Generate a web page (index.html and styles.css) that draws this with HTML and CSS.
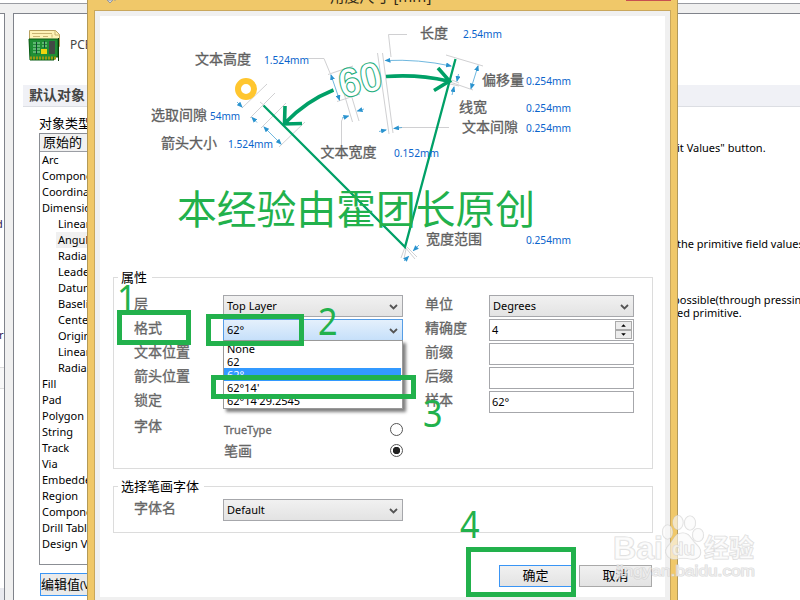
FILE: index.html
```
<!DOCTYPE html>
<html lang="zh-CN">
<head>
<meta charset="utf-8">
<title>角度尺寸</title>
<link rel="stylesheet" href="styles.css">
</head>
<body>
<div class="screen">
  <div class="topline"></div>
  <div class="workspace">
    <aside class="side"><span class="frag f1">d</span><span class="frag f2">r</span><div class="sidebox"></div><div class="sidefoot"></div></aside>
    <main class="prefs">
      <header class="prefs-head">
        <svg class="board" width="33" height="33" viewBox="0 0 33 33">
          <path d="M1.500 1.500h26l4 4v12h-30z" fill="#fff3b8" stroke="#b9a262"/>
          <path d="M27 1v5h5M4 4.500h20M5 7.500h7m3 0h5m4-2v3" fill="none" stroke="#c9b473"/>
          <path d="M1 10h29v18H26v3H2z" fill="#1f8f35" stroke="#075a12"/>
          <path d="M2 29h26" stroke="#9b9a12" stroke-width="3" stroke-dasharray="2 1"/>
          <path d="M30.500 9v23" stroke="#0a3a0a"/>
          <path d="M5 14h7M5 17h7M5 20h7M5 23h7M14 14h5M14 17h5" stroke="#9ee0ae"/>
          <path d="M8.500 13v12M16.500 12v7" stroke="#174a35"/>
          <rect x="21" y="12" width="6" height="13" fill="#424a45"/>
          <rect x="13" y="20" width="6" height="5" fill="#f0d411"/>
        </svg>
        <span>PCB</span>
      </header>
      <h2 class="band">默认对象</h2>
      <div class="columns">
        <section class="objects">
          <div class="objects-title">对象类型</div>
          <div class="list">
            <div class="list-head">原始的</div>
            <ul>
              <li>Arc</li><li>Component Body</li><li>Coordinate</li><li>Dimensions</li>
              <li class="sub">Linear</li><li class="sub on">Angular</li><li class="sub">Radial</li><li class="sub">Leader</li><li class="sub">Datum</li><li class="sub">Baseline</li><li class="sub">Center</li><li class="sub">Original</li><li class="sub">Linear Dia</li><li class="sub">Radial Dia</li>
              <li>Fill</li><li>Pad</li><li>Polygon</li><li>String</li><li>Track</li><li>Via</li><li>Embedded</li><li>Region</li><li>Component</li><li>Drill Table</li><li>Design View</li>
            </ul>
          </div>
          <div class="edit">编辑值<small>(V)</small></div>
        </section>
        <section class="help">
          <p>it Values" button.</p>
          <p class="h2">the primitive field values</p>
          <p class="h3">possible(through pressing<br><span>ed primitive.</span></p>
        </section>
      </div>
    </main>
  </div>

  <div class="dialog">
    <div class="titlebar"><svg width="10" height="4" viewBox="0 0 10 4"><path d="M1 0h6L4 3zM8 0h2" fill="#d8dadc" stroke="#999"/></svg><span class="title">角度尺寸 [mm]</span><i class="close"></i></div>
    <div class="client">
      <div class="page">
        <svg class="diagram" width="565" height="250" viewBox="100 16 565 250">
          <defs>
            <marker id="tip" markerUnits="userSpaceOnUse" markerWidth="6" markerHeight="5" refX="5" refY="2.500" orient="auto-start-reverse"><path d="M0 0L6 2.500L0 5z" fill="#2a93cf"/></marker>
          </defs>
          <g class="guide">
            <path d="M308 58.500H324L330 73M328 74.500L353 66M337 101.500L360 94M343 90L352.500 122M350 91L359 121M343 118L341.500 121V145"/>
            <path d="M267 84L242 108M275 93L250 118M286 103L261 128M305 122L279 147M260 102L265 106"/>
            <path d="M407 34.500H388.500L391 57M377.500 53L389 134M382.500 53L393 133M446 55L483 66M450 82L473 90M450 84L459 86M452 80L459 83M399 127.500H449"/>
            <path d="M405 247L401 258M406 249L404 259M405 247L415 259M407 247L417 257"/>
          </g>
          <g class="arrow">
            <path class="two" d="M331 75L339.500 100"/><path class="two" d="M264 127L281 144"/>
            <path class="two" d="M385.500 60.500Q419 59 451 66"/><path class="two" d="M478 66L471 88.500"/>
            <path d="M237 102L242 107"/><path d="M257 122.500L252 117.500"/><path d="M342 118L348.500 116"/><path d="M364 109L357.500 111"/>
            <path d="M458.500 74L457 81"/><path d="M452 95L454 87"/><path d="M379 131.500L386 130"/><path d="M402 127.500L394 128.500"/>
            <path d="M419 245L413.500 250.500"/><path d="M404 261L408.500 256.500"/>
          </g>
          <circle cx="246" cy="89" r="8" fill="none" stroke="#ffc62f" stroke-width="6"/>
          <g class="dim">
            <path class="leg" d="M263.500 105.500L405 247L455.500 59"/>
            <path d="M333.500 90Q306 101 285 123M285 106L284.500 124L302 123.500"/>
            <path d="M386 76.500Q418 74 448 81M438 68L449.500 81L434 90.500"/>
          </g>
          <text class="sixty" x="338" y="94" textLength="44" lengthAdjust="spacingAndGlyphs" transform="rotate(-13 360 79)">60</text>
          <g class="lab">
            <text x="195" y="64">文本高度</text><text x="151" y="120">选取间隙</text><text x="161" y="148">箭头大小</text>
            <text x="320.500" y="157">文本宽度</text><text x="420" y="38">长度</text><text x="482" y="85">偏移量</text>
            <text x="459" y="112">线宽</text><text x="462" y="132">文本间隙</text><text x="426" y="244">宽度范围</text>
          </g>
          <g class="val">
            <text x="264" y="64" textLength="45" lengthAdjust="spacingAndGlyphs">1.524mm</text><text x="210" y="120" textLength="30" lengthAdjust="spacingAndGlyphs">54mm</text><text x="228" y="148" textLength="45" lengthAdjust="spacingAndGlyphs">1.524mm</text>
            <text x="394" y="157" textLength="45" lengthAdjust="spacingAndGlyphs">0.152mm</text><text x="463" y="38" textLength="39" lengthAdjust="spacingAndGlyphs">2.54mm</text><text x="526" y="85" textLength="45" lengthAdjust="spacingAndGlyphs">0.254mm</text>
            <text x="526" y="112" textLength="45" lengthAdjust="spacingAndGlyphs">0.254mm</text><text x="526" y="132" textLength="45" lengthAdjust="spacingAndGlyphs">0.254mm</text><text x="526" y="244" textLength="45" lengthAdjust="spacingAndGlyphs">0.254mm</text>
          </g>
        </svg>

        <section class="group props">
          <h3>属性</h3>
          <div class="fields">
            <label>层</label><div class="combo">Top Layer<svg class="chev" viewBox="0 0 9 6"><path d="M1 1l3.500 3.500L8 1"/></svg></div><label>单位</label><div class="combo">Degrees<svg class="chev" viewBox="0 0 9 6"><path d="M1 1l3.500 3.500L8 1"/></svg></div>
            <label>格式</label><div class="combo active">62°<svg class="chev" viewBox="0 0 9 6"><path d="M1 1l3.500 3.500L8 1"/></svg>
              <div class="menu"><div>None</div><div>62</div><div class="sel">62°</div><div>62°14'</div><div>62°14'29.2545</div></div>
            </div><label>精确度</label><div class="input spin">4<span class="spinner"><svg viewBox="0 0 17 9"><path d="M5.500 6h6L8.500 3z"/></svg><svg viewBox="0 0 17 9"><path d="M5.500 3h6L8.500 6z"/></svg></span></div>
            <label>文本位置</label><div></div><label>前缀</label><div class="input"></div>
            <label>箭头位置</label><div></div><label>后缀</label><div class="input"></div>
            <label>锁定</label><div></div><label>样本</label><div class="input">62°</div>
          </div>
          <div class="fonts">
            <label>字体</label>
            <div class="radios"><div class="radio"><span class="tt">TrueType</span><i></i></div><div class="radio"><span>笔画</span><i class="checked"></i></div></div>
          </div>
        </section>

        <section class="group stroke">
          <h3>选择笔画字体</h3>
          <div class="fields"><label>字体名</label><div class="combo">Default<svg class="chev" viewBox="0 0 9 6"><path d="M1 1l3.500 3.500L8 1"/></svg></div></div>
        </section>
        <div class="buttons"><div class="btn primary">确定</div><div class="btn">取消</div></div>
      </div>
    </div>
  </div>

  <svg class="watermark" width="150" height="75" viewBox="608 512 150 75">
    <g class="wm">
      <text x="613" y="559" font-size="31" font-weight="bold" textLength="50" lengthAdjust="spacingAndGlyphs">Bai</text>
      <ellipse cx="667.500" cy="532" rx="5" ry="7"/><ellipse cx="678" cy="522.500" rx="5" ry="7"/><ellipse cx="690" cy="523" rx="5.500" ry="7"/><ellipse cx="698" cy="535" rx="5.500" ry="6.500"/>
      <path d="M683 533C674 533 674 541 669 545C662 552 668 560 676 559C681 558 686 558 691 559C700 560 704 552 697 545C691 540 690 533 683 533z"/>
      <text x="672" y="555" font-size="19" font-weight="bold" textLength="23" lengthAdjust="spacingAndGlyphs">du</text>
      <text class="wmcjk" x="704" y="557" font-size="25" font-weight="bold" textLength="50">经验</text>
      <text x="616" y="576" font-size="14" textLength="139" lengthAdjust="spacingAndGlyphs">jingyan.baidu.com</text>
    </g>
  </svg>

  <div class="note headline">本经验由霍团长原创</div>
  <div class="note n1">1</div><div class="note n2">2</div><div class="note n3">3</div><div class="note n4">4</div>
  <div class="mark m1"></div><div class="mark m2"></div><div class="mark m3"></div><div class="mark m4"></div>
</div>
</body>
</html>
```
FILE: styles.css
```
* { box-sizing: border-box; }
body { margin: 0; font: 11px/16px "Noto Sans", "Noto Sans CJK SC", sans-serif; color: #000; }
h2, h3, p, ul { margin: 0; padding: 0; }
.screen { position: relative; width: 800px; height: 600px; overflow: hidden; background: #f0f0f0; display: flex; flex-direction: column; }
.topline { height: 4px; flex: none; background: #fff; border-bottom: 1px solid #9a9ca2; }
.workspace { display: flex; gap: 8px; padding-top: 9px; flex: 1; }
.side { position: relative; width: 5px; background: #fff; border-top: 1px solid #80838b; border-right: 1px solid #80838b; overflow: hidden; }
.frag { position: absolute; color: #302050; }
.f1 { left: -4px; top: 202px; }
.f2 { left: -1px; top: 313px; }
.sidebox { margin-top: 353px; height: 22px; border: solid #ddd; border-width: 1px 0; background: #f8f8f8; }
.sidefoot { margin-top: 199px; height: 13px; background: #e9eaef; }
.prefs { width: 787px; background: #fff; border: solid #80838b; border-width: 1px 0 0 1px; white-space: nowrap; }
.prefs-head { display: flex; height: 71px; padding: 15px 0 0 14px; gap: 9px; font-size: 13px; line-height: 31px; color: #444; }
.prefs-head span { display: inline-block; transform: scaleX(.92); transform-origin: left; }
.band { margin-left: 9px; height: 22px; padding-left: 6px; background: #f0f1f6; border-bottom: 1px solid #dcdee3; font: bold 14px/18px "Noto Sans CJK SC", sans-serif; color: #444; }
.columns { display: flex; }
.objects { width: 637px; padding: 7px 0 0 25px; flex: none; }
.objects-title { height: 19px; font: 13px/18px "Noto Sans CJK SC", sans-serif; }
.list { height: 432px; width: 200px; border: 1px solid #8b8e94; }
.list-head { height: 18px; padding-left: 3px; border-bottom: 1px solid #9b9ea4; background: #f1f1f1; font: 13px/15px "Noto Sans CJK SC", sans-serif; }
.list ul { list-style: none; }
.list li { height: 16px; padding-left: 2px; }
.list .sub { margin-left: 16px; }
.list .on { background: #f0f0f0; }
.edit { margin: 8px 0 0 1px; height: 23px; border: 1px solid #3a95f5; background: #eaeaea; font: 13px/19px "Noto Sans CJK SC", sans-serif; width: 80px; }
.edit small { font: 11px "Noto Sans", sans-serif; }
.help { padding: 34px 0 0 26px; line-height: 13px; }
.h2 { margin-top: 83px; }
.h3 { margin-top: 43px; margin-left: -4px; }
.h3 span { margin-left: 4px; }

.dialog { position: absolute; left: 87px; top: -20px; width: 591px; height: 640px; background: #f0c869; border: 1px solid #b39a58; display: flex; flex-direction: column; padding: 0 6px; }
.titlebar { height: 29px; display: flex; justify-content: space-between; padding: 19px 0 0 12px; flex: none; }
.title { margin: -13px 131px 0 168px; width: 120px; font-size: 15px; line-height: 18px; white-space: nowrap; color: #332b18; font-family: "Noto Sans", "Noto Sans CJK SC", sans-serif; }
.close { width: 45px; height: 1px; background: #c75050; }
.client { flex: 1; border: 1px solid #c9a75c; background: #f0f0f0; padding: 5px 5px 0; }
.page { height: 581px; background: #fff; display: flex; flex-direction: column; }
.diagram { display: block; flex: none; }
.guide path { fill: none; stroke: #d0d0d2; stroke-width: 1; }
.arrow path { fill: none; stroke: #4aa4d6; stroke-width: .8; marker-end: url(#tip); }
.arrow .two { marker-start: url(#tip); }
.dim path { fill: none; stroke: #00a067; stroke-width: 3.6; }
.dim .leg { stroke-width: 2.3; }
.sixty { font: bold 41px "Liberation Sans", sans-serif; fill: #fff; stroke: #21ad7c; stroke-width: 1; }
.lab text { font: 14px "Noto Sans CJK SC", sans-serif; fill: #5f5f5f; stroke: #5f5f5f; stroke-width: .3; }
.val text { font: 11px "Noto Sans", sans-serif; fill: #0a64cc; }

.group { position: relative; margin-left: 13px; width: 540px; border: 1px solid #dcdcdc; flex: none; }
.group h3 { width: max-content; margin: -10px 0 1px 4px; padding: 0 5px 0 3px; background: #fff; font: 13px/17px "Noto Sans CJK SC", sans-serif; }
.props { margin-top: 11px; height: 192px; }
.stroke { margin-top: 17px; height: 47px; }
.fields { display: grid; grid-template-columns: 89px 180px 86px 145px; grid-auto-rows: 22px; row-gap: 2px; padding-left: 20px; column-gap: 0; margin-top: 10px; }
.fields > :nth-child(4n+3) { padding-left: 22px; }
.stroke .fields { margin-top: 5px; }
label, .radio { font: 14px/17px "Noto Sans CJK SC", sans-serif; color: #666; -webkit-text-stroke: .3px #666; }
.combo, .input { position: relative; height: 22px; border: 1px solid #a6a7ab; padding-left: 3px; line-height: 19px; }
.combo { background: linear-gradient(#f1f1f1, #e3e3e3); }
.combo.active { background: linear-gradient(#e4f0fc, #c6e0fa); border-color: #569de5; }
.chev { position: absolute; right: 4px; top: 8px; width: 9px; height: 6px; }
.chev path { fill: none; stroke: #555; stroke-width: 1.8; }
.input { background: #fff; padding-left: 2px; }
.spinner { position: absolute; right: 1px; top: 1px; width: 17px; display: grid; gap: 0; }
.spinner svg { display: block; width: 17px; height: 9px; background: #ececec; border: 1px solid #aaa; }
.menu { position: absolute; left: -1px; top: 20px; width: 180px; height: 69px; padding-top: 1px; background: #fff; border: 1px solid #999; box-shadow: 3px 3px 3px rgba(0,0,0,.5); line-height: 13px; }
.menu div { height: 13px; padding-left: 3px; margin-right: 1px; }
.menu .sel { background: #3399ff; color: #fff; }
.fonts { display: flex; padding: 4px 0 0 20px; }
.fonts > label { width: 90px; }
.radios { width: 179px; padding-top: 2px; }
.radio { display: flex; justify-content: space-between; align-items: center; height: 21px; }
.tt { font: 11px "Noto Sans", sans-serif; }
.radio i { width: 13px; height: 13px; border: 1px solid #555; border-radius: 50%; background: #fff; }
.radio .checked { background: radial-gradient(circle, #222 0 3.4px, #fff 4px); }
.buttons { display: flex; gap: 7px; margin: 32px 13px 0 auto; }
.btn { width: 73px; height: 22px; border: 1px solid #a9a9a9; background: linear-gradient(#f1f1f1, #e3e3e3); text-align: center; font: 13px/18px "Noto Sans CJK SC", sans-serif; }
.btn.primary { border-color: #3a95f5; }

.watermark { position: absolute; left: 608px; top: 512px; }
.wm > * { fill: rgba(250,250,250,.6); stroke: rgba(205,205,205,.7); stroke-width: 1.2; paint-order: stroke; }
.wm text { font-family: "Liberation Sans", sans-serif; }
.wm .wmcjk { font-family: "Noto Sans CJK SC", sans-serif; }
.note { position: absolute; color: #22b14c; font: 38px/40px "Noto Sans", sans-serif; transform: scaleX(.9); transform-origin: left; }
.headline { left: 177px; top: 187px; font: 39.8px/40px "Noto Sans CJK SC", sans-serif; white-space: nowrap; transform: none; }
.n1 { left: 117px; top: 277px; }
.n2 { left: 318px; top: 300px; }
.n3 { left: 423px; top: 392px; }
.n4 { left: 460px; top: 503px; }
.mark { position: absolute; border: 5px solid #22b14c; }
.m1 { left: 117px; top: 310px; width: 74px; height: 35px; }
.m2 { left: 206px; top: 314px; width: 98px; height: 32px; }
.m3 { left: 211px; top: 375px; width: 205px; height: 24px; }
.m4 { left: 466px; top: 547px; width: 110px; height: 50px; }
```
